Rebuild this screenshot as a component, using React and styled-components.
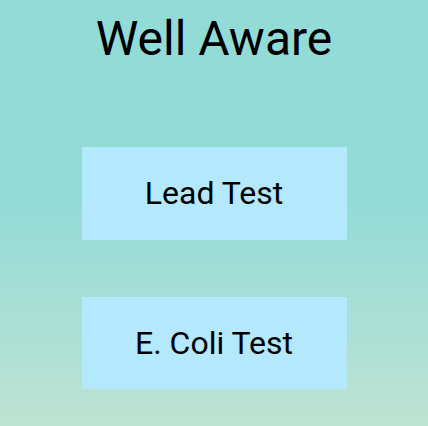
import React from "react";
import styled, { createGlobalStyle } from "styled-components";

const Global = createGlobalStyle`
  html, body { margin: 0; padding: 0; }
  body { font-family: Roboto, "Noto Sans", sans-serif; }
`;

const Page = styled.div`
  min-height: 426px;
  box-sizing: border-box;
  background: linear-gradient(to bottom, #93dbd7 0%, #93dbd7 47%, #bee3d3 100%);
  display: flex;
  flex-direction: column;
  align-items: center;
  padding-top: 11px;
`;

const Title = styled.h1`
  margin: 0;
  font-size: 48px;
  font-weight: 400;
  line-height: 56px;
  color: #000;
`;

const Buttons = styled.div`
  display: flex;
  flex-direction: column;
  gap: 57px;
  margin-top: 80px;
`;

const TestButton = styled.button`
  width: 265px;
  height: 92.5px;
  border: none;
  background: #b3e8fd;
  font-family: Roboto, sans-serif;
  font-size: 32px;
  color: #000;
  padding: 0;
  cursor: pointer;
`;

export default function App() {
  return (
    <>
      <Global />
      <Page>
        <Title>Well Aware</Title>
        <Buttons>
          <TestButton>Lead Test</TestButton>
          <TestButton>E. Coli Test</TestButton>
        </Buttons>
      </Page>
    </>
  );
}
